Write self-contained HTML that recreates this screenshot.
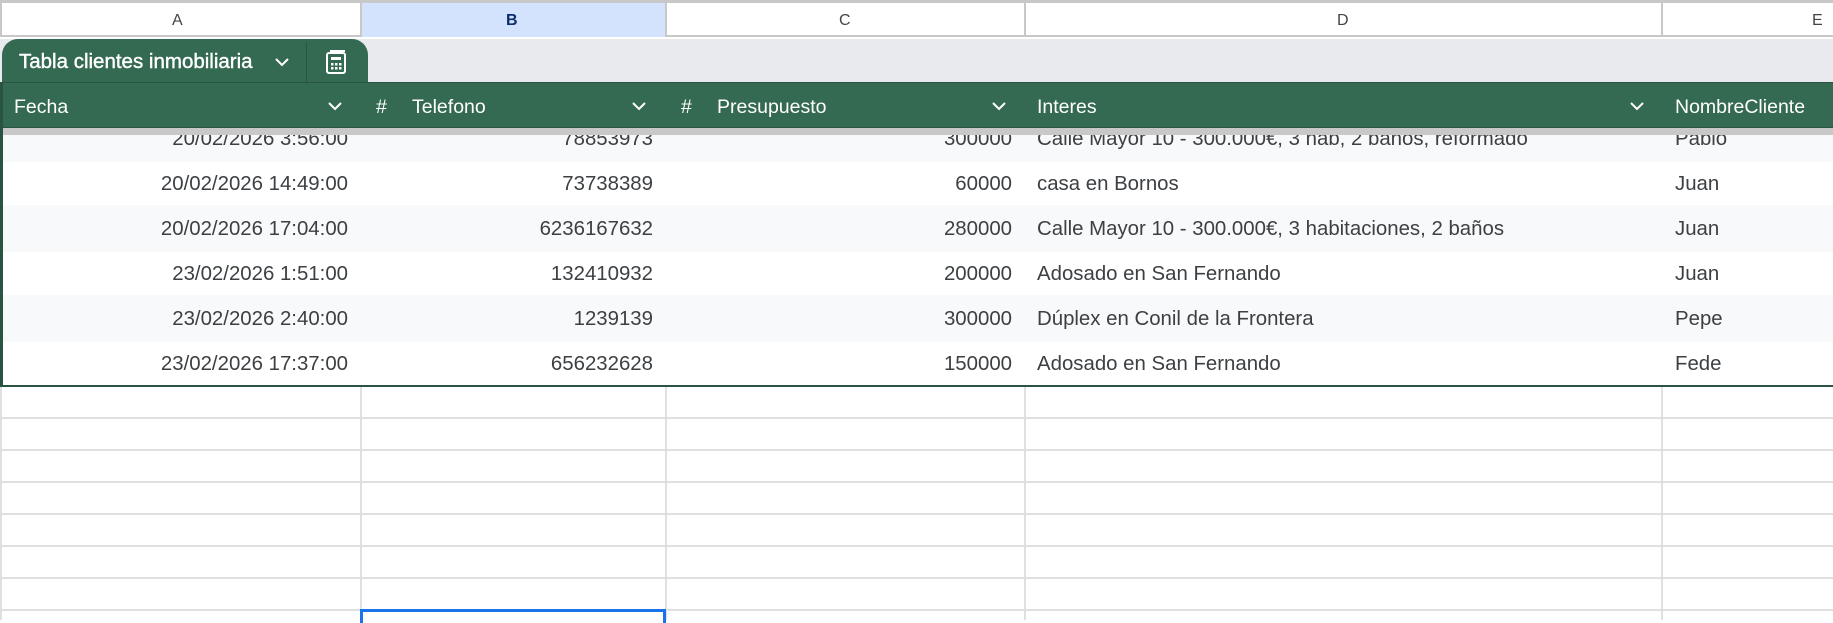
<!DOCTYPE html>
<html><head><meta charset="utf-8"><style>
*{margin:0;padding:0;box-sizing:border-box}
body{width:1833px;height:620px;overflow:hidden;background:#fff;font-family:"Liberation Sans",Arial,sans-serif;position:relative;color:#3c4043}
.a{position:absolute}
.hl{position:absolute;height:2px;background:#e0e0e0;left:0;width:1833px}
.vl{position:absolute;width:2px;background:#e0e0e0}
.t{position:absolute;font-size:20.4px;white-space:nowrap;line-height:24px}
.r{text-align:right}
.h{position:absolute;color:#fff;font-size:19.5px;line-height:24px;white-space:nowrap}
</style></head><body>
<div class="a" style="left:0;top:0;width:1833px;height:3px;background:#c8c8c8"></div>
<div class="a" style="left:0;top:3px;width:1833px;height:34px;background:#fff;border-bottom:2px solid #c8c8c8"></div>
<div class="a" style="left:361px;top:3px;width:304px;height:34px;background:#d3e3fd"></div>
<div class="a" style="left:0;top:3px;width:2px;height:34px;background:#c8c8c8"></div>
<div class="a" style="left:360px;top:3px;width:2px;height:34px;background:#c8c8c8"></div>
<div class="a" style="left:665px;top:3px;width:2px;height:34px;background:#c8c8c8"></div>
<div class="a" style="left:1024px;top:3px;width:2px;height:34px;background:#c8c8c8"></div>
<div class="a" style="left:1661px;top:3px;width:2px;height:34px;background:#c8c8c8"></div>
<div class="t" style="left:172px;top:9px;font-size:16px;color:#444">A</div>
<div class="t" style="left:506px;top:9px;font-size:16px;color:#0b2f6b;font-weight:bold">B</div>
<div class="t" style="left:839px;top:9px;font-size:16px;color:#444">C</div>
<div class="t" style="left:1337px;top:9px;font-size:16px;color:#444">D</div>
<div class="t" style="left:1812px;top:9px;font-size:16px;color:#444">E</div>
<div class="a" style="left:0;top:39px;width:1833px;height:43px;background:#e8eaed"></div>
<div class="a" style="left:2px;top:39px;width:366px;height:45px;background:#346a52;border-radius:16px 16px 0 0"></div>
<div class="a" style="left:306px;top:42px;width:1px;height:40px;background:#2a5442"></div>
<div class="h" style="left:19px;top:50px;font-size:20.5px;-webkit-text-stroke:0.4px #fff">Tabla clientes inmobiliaria</div>
<svg class="a" style="left:274px;top:57px" width="16" height="10" viewBox="0 0 16 10"><path d="M2 2l6 6 6-6" stroke="#fff" stroke-width="2" fill="none"/></svg>
<svg class="a" style="left:325px;top:49px" width="24" height="26" viewBox="0 0 24 26"><rect x="2" y="4" width="18" height="20" rx="2" stroke="#fff" stroke-width="2" fill="none"/><path d="M5 2h15" stroke="#fff" stroke-width="2"/><rect x="6" y="8" width="10" height="3" fill="#fff"/><g fill="#fff"><rect x="6" y="14" width="2.5" height="2.5"/><rect x="10" y="14" width="2.5" height="2.5"/><rect x="14" y="14" width="2.5" height="2.5"/><rect x="6" y="18" width="2.5" height="2.5"/><rect x="10" y="18" width="2.5" height="2.5"/><rect x="14" y="18" width="2.5" height="2.5"/></g></svg>
<div class="a" style="left:0;top:82px;width:1833px;height:46px;background:#346a52;border-top:1px solid #2a5442;border-bottom:1px solid #2a5442"></div>
<div class="a" style="left:0;top:128px;width:1833px;height:7px;background:#c8c8c8"></div>
<div class="h" style="left:14px;top:95px">Fecha</div>
<div class="h" style="left:376px;top:95px">#</div>
<div class="h" style="left:412px;top:95px">Telefono</div>
<div class="h" style="left:681px;top:95px">#</div>
<div class="h" style="left:717px;top:95px">Presupuesto</div>
<div class="h" style="left:1037px;top:95px">Interes</div>
<div class="h" style="left:1675px;top:95px">NombreCliente</div>
<svg class="a" style="left:327px;top:101px" width="16" height="10"><path d="M2 2l6 6 6-6" stroke="#fff" stroke-width="2" fill="none"/></svg>
<svg class="a" style="left:631px;top:101px" width="16" height="10"><path d="M2 2l6 6 6-6" stroke="#fff" stroke-width="2" fill="none"/></svg>
<svg class="a" style="left:991px;top:101px" width="16" height="10"><path d="M2 2l6 6 6-6" stroke="#fff" stroke-width="2" fill="none"/></svg>
<svg class="a" style="left:1629px;top:101px" width="16" height="10"><path d="M2 2l6 6 6-6" stroke="#fff" stroke-width="2" fill="none"/></svg>
<div class="a" style="left:0;top:135px;width:1833px;height:27px;background:#f8f9fa;overflow:hidden">
 <div class="t r" style="right:1485px;top:-8px">20/02/2026 3:56:00</div>
 <div class="t r" style="right:1180px;top:-8px">78853973</div>
 <div class="t r" style="right:821px;top:-8px">300000</div>
 <div class="t" style="left:1037px;top:-8px">Calle Mayor 10 - 300.000€, 3 hab, 2 baños, reformado</div>
 <div class="t" style="left:1675px;top:-8px">Pablo</div>
</div>
<div class="a" style="left:0;top:162px;width:1833px;height:43px;background:#fff"></div>
<div class="a" style="left:0;top:205px;width:1833px;height:47px;background:#f8f9fa"></div>
<div class="a" style="left:0;top:252px;width:1833px;height:43px;background:#fff"></div>
<div class="a" style="left:0;top:295px;width:1833px;height:47px;background:#f8f9fa"></div>
<div class="a" style="left:0;top:342px;width:1833px;height:43px;background:#fff"></div>

<div class="t r" style="right:1485px;top:172px">20/02/2026 14:49:00</div>
<div class="t r" style="right:1180px;top:172px">73738389</div>
<div class="t r" style="right:821px;top:172px">60000</div>
<div class="t" style="left:1037px;top:172px">casa en Bornos</div>
<div class="t" style="left:1675px;top:172px">Juan</div>

<div class="t r" style="right:1485px;top:217px">20/02/2026 17:04:00</div>
<div class="t r" style="right:1180px;top:217px">6236167632</div>
<div class="t r" style="right:821px;top:217px">280000</div>
<div class="t" style="left:1037px;top:217px">Calle Mayor 10 - 300.000€, 3 habitaciones, 2 baños</div>
<div class="t" style="left:1675px;top:217px">Juan</div>

<div class="t r" style="right:1485px;top:262px">23/02/2026 1:51:00</div>
<div class="t r" style="right:1180px;top:262px">132410932</div>
<div class="t r" style="right:821px;top:262px">200000</div>
<div class="t" style="left:1037px;top:262px">Adosado en San Fernando</div>
<div class="t" style="left:1675px;top:262px">Juan</div>

<div class="t r" style="right:1485px;top:307px">23/02/2026 2:40:00</div>
<div class="t r" style="right:1180px;top:307px">1239139</div>
<div class="t r" style="right:821px;top:307px">300000</div>
<div class="t" style="left:1037px;top:307px">Dúplex en Conil de la Frontera</div>
<div class="t" style="left:1675px;top:307px">Pepe</div>

<div class="t r" style="right:1485px;top:352px">23/02/2026 17:37:00</div>
<div class="t r" style="right:1180px;top:352px">656232628</div>
<div class="t r" style="right:821px;top:352px">150000</div>
<div class="t" style="left:1037px;top:352px">Adosado en San Fernando</div>
<div class="t" style="left:1675px;top:352px">Fede</div>

<div class="a" style="left:0;top:82px;width:3px;height:304px;background:#2a5442"></div>
<div class="a" style="left:0;top:385px;width:1833px;height:2px;background:#2a5442"></div>
<div class="vl" style="left:0;top:387px;height:233px"></div>
<div class="vl" style="left:360px;top:387px;height:233px"></div>
<div class="vl" style="left:665px;top:387px;height:233px"></div>
<div class="vl" style="left:1024px;top:387px;height:233px"></div>
<div class="vl" style="left:1661px;top:387px;height:233px"></div>
<div class="hl" style="top:417px"></div>
<div class="hl" style="top:449px"></div>
<div class="hl" style="top:481px"></div>
<div class="hl" style="top:513px"></div>
<div class="hl" style="top:545px"></div>
<div class="hl" style="top:577px"></div>
<div class="hl" style="top:609px"></div>
<div class="a" style="left:360px;top:609px;width:306px;height:14px;border:3px solid #1a73e8;border-bottom:none"></div>
</body></html>
